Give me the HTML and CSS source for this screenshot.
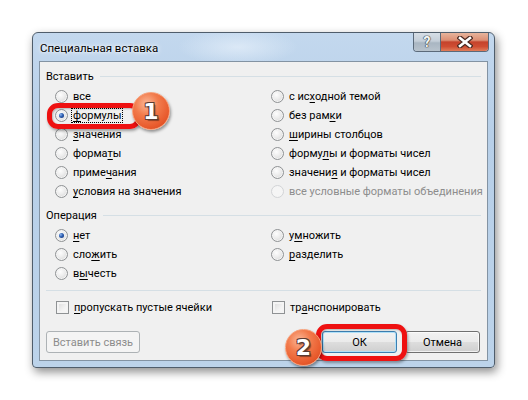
FILE: index.html
```html
<!DOCTYPE html>
<html lang="ru">
<head>
  <meta charset="UTF-8" />
  <title>Специальная вставка</title>
  <link rel="stylesheet" href="styles.css">
</head>
<body>
  <div class="stage">
    <div class="window">
      <div class="titlebar">
        <span class="title">Специальная вставка</span>
        <div class="caption-buttons">
          <span class="cap-btn help">?</span>
          <span class="cap-btn close">
            <svg width="16" height="12" viewBox="0 0 16 12">
              <path d="M3 2 L13 10 M13 2 L3 10" stroke="#4a2a22" stroke-width="5" stroke-linecap="square" fill="none"/>
              <path d="M3 2 L13 10 M13 2 L3 10" stroke="#ffffff" stroke-width="2.6" stroke-linecap="square" fill="none"/>
            </svg>
          </span>
        </div>
      </div>

      <div class="client">
        <div class="group-title"><span>Вставить</span></div>
        <div class="options paste">
          <div class="opt"><span class="radio"></span><span>все</span></div>
          <div class="opt"><span class="radio checked"></span><span class="focus"><u>ф</u>ормулы</span></div>
          <div class="opt"><span class="radio"></span><span><u>з</u>начения</span></div>
          <div class="opt"><span class="radio"></span><span>форма<u>т</u>ы</span></div>
          <div class="opt"><span class="radio"></span><span>приме<u>ч</u>ания</span></div>
          <div class="opt"><span class="radio"></span><span><u>у</u>словия на значения</span></div>
          <div class="opt"><span class="radio"></span><span>с ис<u>х</u>одной темой</span></div>
          <div class="opt"><span class="radio"></span><span>без рам<u>к</u>и</span></div>
          <div class="opt"><span class="radio"></span><span><u>ш</u>ирины столбцов</span></div>
          <div class="opt"><span class="radio"></span><span>форму<u>л</u>ы и форматы чисел</span></div>
          <div class="opt"><span class="radio"></span><span>значени<u>я</u> и форматы чисел</span></div>
          <div class="opt disabled"><span class="radio"></span><span>все условные форматы объединения</span></div>
        </div>

        <div class="group-title second"><span>Операция</span></div>
        <div class="options operation">
          <div class="opt"><span class="radio checked"></span><span><u>н</u>ет</span></div>
          <div class="opt"><span class="radio"></span><span>сло<u>ж</u>ить</span></div>
          <div class="opt"><span class="radio"></span><span>в<u>ы</u>честь</span></div>
          <div class="opt"><span class="radio"></span><span>у<u>м</u>ножить</span></div>
          <div class="opt"><span class="radio"></span><span><u>р</u>азделить</span></div>
        </div>

        <div class="separator"></div>

        <div class="checks">
          <div class="opt"><span class="checkbox"></span><span><u>п</u>ропускать пустые ячейки</span></div>
          <div class="opt"><span class="checkbox"></span><span>тр<u>а</u>нспонировать</span></div>
        </div>

        <div class="buttons">
          <span class="btn disabled link">Вставить связь</span>
          <span class="btn default">ОК</span>
          <span class="btn">Отмена</span>
        </div>
      </div>
    </div>

    <div class="mark-frame frame-1"></div>
    <div class="badge badge-1">1</div>
    <div class="mark-frame frame-2"></div>
    <div class="badge badge-2">2</div>
  </div>
</body>
</html>
```

FILE: styles.css
```css
* {
  box-sizing: border-box;
  margin: 0;
  padding: 0;
}

body {
  background-color: #ffffff;
  font-family: Roboto, "Noto Sans", sans-serif;
  font-size: 11px;
  color: #000000;
}

.stage {
  position: relative;
  width: 528px;
  height: 400px;
  padding: 32px 0 0 32px;
  overflow: hidden;
}

/* window frame */

.window {
  width: 463px;
  border: 1px solid #4f5d6b;
  border-radius: 6px 6px 4px 4px;
  padding: 0 6px 6px 6px;
  background:
    radial-gradient(ellipse 60px 18px at 205px 14px, rgba(230, 240, 250, 0.7), rgba(230, 240, 250, 0) 100%),
    linear-gradient(180deg, #c3d8ee 0%, #b7cfe8 30%, #bcd3ea 100%);
  box-shadow: 2px 4px 10px rgba(0, 0, 0, 0.45);
}

.titlebar {
  height: 28px;
  display: flex;
  align-items: flex-start;
}

.title {
  margin: 7px 0 0 1px;
  font-size: 11.5px;
  line-height: 16px;
  text-shadow: 0 0 6px #ffffff, 0 0 3px #ffffff;
}

.caption-buttons {
  display: flex;
  margin-left: auto;
  margin-right: -1px;
  border: 1px solid #5b6a7a;
  border-top: none;
  border-radius: 0 0 4px 4px;
  overflow: hidden;
  height: 19px;
}

.cap-btn {
  display: flex;
  align-items: center;
  justify-content: center;
  height: 18px;
}

.cap-btn.help {
  width: 27px;
  color: #f4f6f8;
  font-weight: bold;
  font-size: 14px;
  text-shadow: 0 0 1px #333, 0 0 1px #333, 0 0 1px #333;
  background: linear-gradient(180deg, #d6dee6 0%, #c4ced8 45%, #a9b6c2 55%, #b8c3cd 100%);
  border-right: 1px solid #5b6a7a;
}

.cap-btn.close {
  width: 47px;
  background: linear-gradient(180deg, #e7b49c 0%, #dc8f74 40%, #c5432c 50%, #cf4d32 75%, #e07d5a 100%);
}

/* client area */

.client {
  border: 1px solid #8393a3;
  background-color: #f0f0f0;
  padding-bottom: 7px;
}

.group-title {
  display: flex;
  align-items: center;
  height: 14px;
  margin-top: 7px;
  padding: 0 6px;
}

.group-title::after {
  content: "";
  flex: 1;
  height: 1px;
  margin-left: 6px;
  background-color: #d5dfe5;
}

.options {
  display: grid;
  grid-auto-flow: column;
  grid-template-columns: 216px 1fr;
  grid-template-rows: repeat(6, 19px);
  margin-top: 4px;
  padding-left: 15px;
}

.options.operation {
  grid-template-rows: repeat(3, 19px);
}

.opt {
  display: flex;
  align-items: center;
  gap: 5px;
  white-space: nowrap;
}

.opt u {
  text-underline-offset: 2px;
}

.opt.disabled {
  color: #8d8d8d;
}

.focus {
  outline: 1px dotted #000000;
  outline-offset: 0;
  padding: 0 1px;
  margin-left: -1px;
}

.radio {
  width: 13px;
  height: 13px;
  border-radius: 50%;
  border: 1px solid #8f9294;
  background: radial-gradient(circle at 40% 35%, #fdfdfd 0%, #ececec 45%, #cfcfcf 100%);
  box-shadow: inset 0 0 0 1px #f4f4f4;
  flex: none;
  position: relative;
}

.radio.checked::after {
  content: "";
  position: absolute;
  left: 3px;
  top: 3px;
  width: 5px;
  height: 5px;
  border-radius: 50%;
  background: radial-gradient(circle at 35% 35%, #8fb8f0 0%, #2b5cb0 45%, #13306c 100%);
}

.opt.disabled .radio {
  border-color: #d2d4d6;
  background: #f5f5f5;
  box-shadow: none;
}

.separator {
  height: 1px;
  margin: 7px 6px 0 6px;
  background-color: #d5dfe5;
}

.checks {
  display: grid;
  grid-template-columns: 216px 1fr;
  height: 19px;
  margin-top: 7px;
  padding-left: 16px;
}

.checkbox {
  width: 13px;
  height: 13px;
  border: 1px solid #8f9294;
  background: linear-gradient(135deg, #d9d9d9 0%, #f2f2f2 60%, #fbfbfb 100%);
  box-shadow: inset 0 0 0 2px #f4f4f4;
  flex: none;
}

/* buttons */

.buttons {
  display: flex;
  gap: 8px;
  margin-top: 14px;
  padding: 0 7px 0 6px;
}

.btn {
  display: flex;
  align-items: center;
  justify-content: center;
  width: 75px;
  height: 22px;
  border: 1px solid #707070;
  border-radius: 3px;
  background: linear-gradient(180deg, #f2f2f2 0%, #ebebeb 48%, #dddddd 52%, #cfcfcf 100%);
  box-shadow: inset 0 0 0 1px rgba(255, 255, 255, 0.7);
}

.btn.link {
  width: 94px;
  margin-right: auto;
}

.btn.disabled {
  color: #8c8c8c;
  border-color: #adb2b5;
  background: #f4f4f4;
  box-shadow: none;
}

.btn.default {
  border-color: #3c7fb1;
  box-shadow: inset 0 0 0 1px #b0e0f8;
}

/* annotations over the dialog */

.mark-frame {
  position: absolute;
  border: 5px solid #ee1111;
  border-radius: 11px;
  box-shadow: 1px 2px 3px rgba(0, 0, 0, 0.35), inset 1px 1px 2px rgba(0, 0, 0, 0.25);
}

.frame-1 {
  left: 47px;
  top: 103px;
  width: 94px;
  height: 26px;
}

.frame-2 {
  left: 316px;
  top: 324px;
  width: 91px;
  height: 37px;
}

.badge {
  position: absolute;
  width: 38px;
  height: 38px;
  border-radius: 50%;
  display: flex;
  align-items: center;
  justify-content: center;
  font-family: "DejaVu Sans", sans-serif;
  font-weight: bold;
  font-size: 22px;
  color: #ffffff;
  text-shadow: 1px 1px 0 #5a3b32, -1px -1px 0 #5a3b32, 1px -1px 0 #5a3b32, -1px 1px 0 #5a3b32, 2px 2px 1px rgba(0, 0, 0, 0.4);
  background: radial-gradient(circle at 38% 30%, #fbb898 0%, #f27b4c 35%, #e85a2c 70%, #c8401c 100%);
  border: 1px solid #f7a07a;
  box-shadow: 1px 2px 3px rgba(0, 0, 0, 0.4);
}

.badge-1 {
  left: 132px;
  top: 92px;
}

.badge-2 {
  left: 285px;
  top: 329px;
  width: 37px;
  height: 37px;
}
```
